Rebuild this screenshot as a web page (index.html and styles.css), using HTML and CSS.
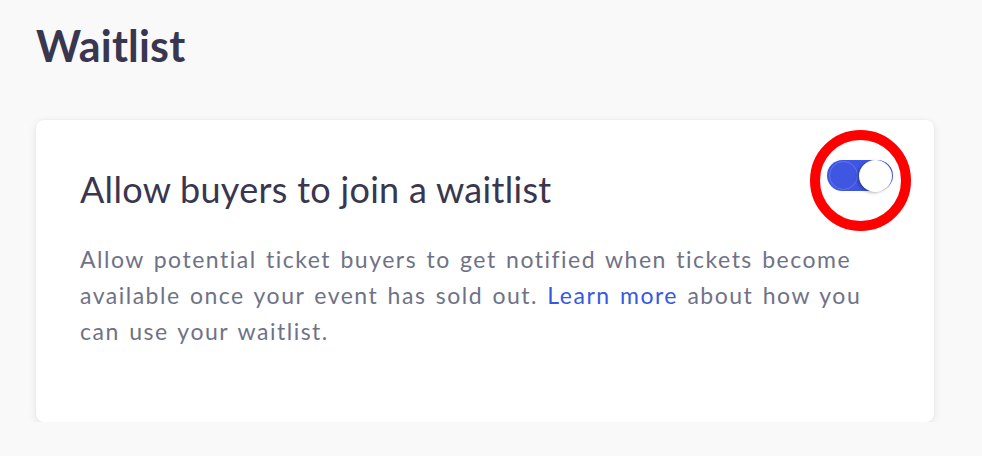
FILE: index.html
```html
<!DOCTYPE html>
<html lang="en">
<head>
<meta charset="utf-8">
<title>Waitlist</title>
<link rel="stylesheet" href="styles.css">
</head>
<body>
<main class="page">
  <h1 class="page-title">Waitlist</h1>
  <section class="card">
    <div class="card-head">
      <h2 class="card-title">Allow buyers to join a waitlist</h2>
      <div class="toggle-wrap">
        <span class="toggle" role="switch" aria-checked="true">
          <span class="toggle-ghost"></span>
          <span class="toggle-knob"></span>
        </span>
        <span class="annotation-ring"></span>
      </div>
    </div>
    <p class="card-text">Allow potential ticket buyers to get notified when tickets become available once your event has sold out. <a class="link" href="#">Learn more</a> about how you can use your waitlist.</p>
  </section>
</main>
</body>
</html>
```

FILE: styles.css
```css
html, body {
  margin: 0;
  padding: 0;
  background: #f9f9f9;
}

body {
  font-family: "Lato", "Inter", "Liberation Sans", sans-serif;
  color: #39364f;
}

.page {
  padding: 20px 48px 0 36px;
}

.page-title {
  margin: 0 0 48px 0;
  font-size: 43px;
  line-height: 52px;
  font-weight: 700;
  letter-spacing: 0.2px;
  color: #39364f;
}

.card {
  background: #ffffff;
  border-radius: 8px;
  box-shadow: 0 2px 8px rgba(0, 0, 0, 0.09), 0 0 2px rgba(0, 0, 0, 0.05);
  padding: 40px 41px 73px 44px;
  width: 813px;
}

.card-head {
  display: flex;
  justify-content: space-between;
  align-items: flex-start;
}

.card-title {
  margin: 7px 0 0 0;
  font-size: 36px;
  line-height: 44px;
  font-weight: 400;
  letter-spacing: 0.3px;
  color: #39364f;
}

.toggle-wrap {
  position: relative;
  width: 66px;
  height: 31px;
}

.toggle {
  display: block;
  position: relative;
  width: 66px;
  height: 31px;
  border-radius: 16px;
  background: #3f56e2;
}

.toggle-ghost {
  position: absolute;
  left: 2px;
  top: 1px;
  width: 29px;
  height: 29px;
  border-radius: 50%;
  border: 1px solid rgba(255, 255, 255, 0.18);
  box-sizing: border-box;
}

.toggle-knob {
  position: absolute;
  right: 1px;
  top: 0;
  width: 33px;
  height: 32px;
  border-radius: 50%;
  background: #ffffff;
  box-shadow: -2px 1px 3px rgba(0, 0, 0, 0.28);
}

.annotation-ring {
  position: absolute;
  left: -17px;
  top: -30px;
  width: 101px;
  height: 101px;
  box-sizing: border-box;
  border: 10.5px solid #ff0000;
  border-radius: 50%;
}

.card-text {
  margin: 30px 0 0 0;
  font-size: 23px;
  line-height: 36px;
  letter-spacing: 1.5px;
  word-spacing: 2px;
  color: #6f7287;
}

.link {
  color: #3659e3;
  text-decoration: none;
}
```
